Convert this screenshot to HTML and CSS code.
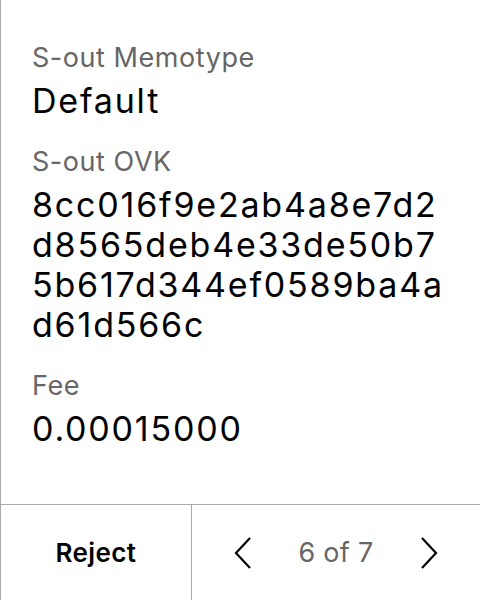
FILE: index.html
```html
<!DOCTYPE html>
<html>
<head>
<meta charset="utf-8">
<link rel="stylesheet" href="styles.css">
</head>
<body>
<div class="screen">
  <main class="content">
    <div class="field">
      <div class="label">S-out Memotype</div>
      <div class="value">Default</div>
    </div>
    <div class="field">
      <div class="label">S-out OVK</div>
      <div class="value">8cc016f9e2ab4a8e7d2<br>d8565deb4e33de50b7<br>5b617d344ef0589ba4a<br>d61d566c</div>
    </div>
    <div class="field">
      <div class="label">Fee</div>
      <div class="value">0.00015000</div>
    </div>
  </main>
  <footer class="footer">
    <div class="reject">Reject</div>
    <div class="pager">
      <svg class="chev" width="18" height="32" viewBox="0 0 18 32"><path d="M16 1 L2 16 L16 31" fill="none" stroke="#000" stroke-width="2.2"/></svg>
      <span class="count">6 of 7</span>
      <svg class="chev" width="18" height="32" viewBox="0 0 18 32"><path d="M2 1 L16 16 L2 31" fill="none" stroke="#000" stroke-width="2.2"/></svg>
    </div>
  </footer>
</div>
</body>
</html>
```

FILE: styles.css
```css
html, body {
  margin: 0;
  padding: 0;
  background: #fff;
}
body {
  font-family: Inter, "Noto Sans", sans-serif;
}
.screen {
  width: 480px;
  height: 600px;
  box-sizing: border-box;
  border-left: 1px solid #aaa;
  display: flex;
  flex-direction: column;
}
.content {
  flex: 1;
  padding: 42px 0 0 31px;
}
.field {
  margin-bottom: 25px;
}
.label {
  font-size: 27px;
  line-height: 32px;
  color: #666;
  margin-bottom: 7px;
  letter-spacing: 0.55px;
}
.value {
  font-size: 34px;
  line-height: 40px;
  color: #000;
  letter-spacing: 1.8px;
}
.footer {
  height: 95px;
  border-top: 1px solid #aaa;
  display: grid;
  grid-template-columns: 191px 1fr;
}
.reject {
  border-right: 1px solid #aaa;
  display: flex;
  align-items: center;
  justify-content: center;
  font-size: 26px;
  font-weight: 600;
  color: #000;
  letter-spacing: 0.4px;
}
.pager {
  display: flex;
  align-items: center;
  justify-content: center;
  gap: 46px;
}
.count {
  font-size: 27px;
  color: #666;
  letter-spacing: 0.3px;
}
.chev {
  display: block;
}
```
